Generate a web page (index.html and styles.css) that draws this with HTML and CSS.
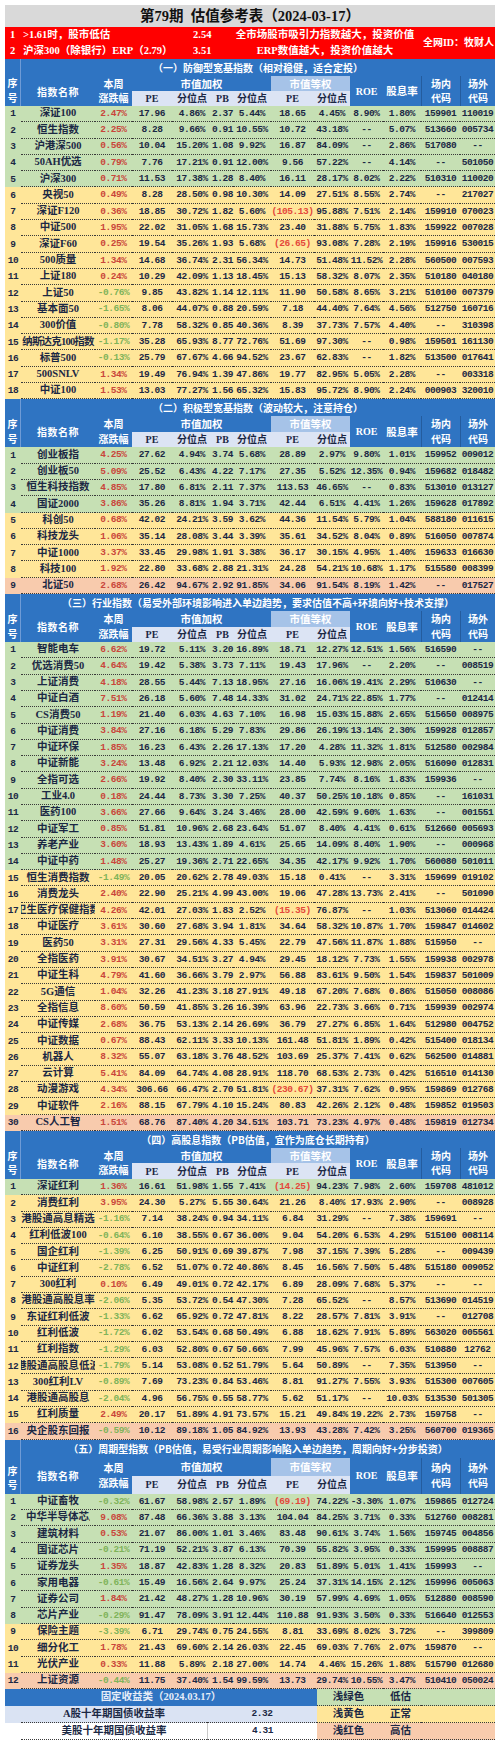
FILE: index.html
```html
<!DOCTYPE html>
<html lang="zh-CN">
<head>
<meta charset="utf-8">
<title>第79期 估值参考表</title>
<link rel="stylesheet" href="styles.css">
</head>
<body>
<div class="sheet">
  <div class="title">第79期  估值参考表（2024-03-17）</div>

  <div class="redbar">
    <span class="rn">1</span><span class="rl">&gt;1.61时，股市低估</span><span class="rv">2.54</span><span class="rdesc">全市场股市吸引力指数越大，投资价值</span><span class="rid">全网ID：牧财人</span>
    <span class="rn">2</span><span class="rl">沪深300（除银行）ERP（2.79）</span><span class="rv">3.51</span><span class="rdesc">ERP数值越大，投资价值越大</span>
  </div>

  <!-- 一 -->
  <div class="hd hd-s1">
    <span class="corner"><span>序</span><span>号</span></span>
    <span class="stitle">（一）防御型宽基指数（相对稳健，适合定投）</span>
    <span class="h-name">指数名称</span>
    <span class="h-chg"><span>本周</span><span>涨跌幅</span></span>
    <span class="h-mw">市值加权</span>
    <span class="h-me">市值等权</span>
    <span class="sub s4">PE</span><span class="sub s5">分位点</span><span class="sub s6">PB</span><span class="sub s7">分位点</span><span class="sub s8">PE</span><span class="sub s9">分位点</span>
    <span class="h-roe">ROE</span>
    <span class="h-dy">股息率</span>
    <span class="h-c1"><span>场内</span><span>代码</span></span>
    <span class="h-c2"><span>场外</span><span>代码</span></span>
  </div>
  <div class="row g"><span>1</span><span>深证100</span><span class="up">2.47%</span><span>17.96</span><span>4.86%</span><span>2.37</span><span>5.44%</span><span>18.65</span><span>4.45%</span><span>8.90%</span><span>1.80%</span><span>159901</span><span>110019</span></div>
  <div class="row g"><span>2</span><span>恒生指数</span><span class="up">2.25%</span><span>8.28</span><span>9.66%</span><span>0.91</span><span>10.55%</span><span>10.72</span><span>43.18%</span><span>--</span><span>5.07%</span><span>513660</span><span>005734</span></div>
  <div class="row g"><span>3</span><span>沪港深500</span><span class="up">0.56%</span><span>10.04</span><span>15.20%</span><span>1.08</span><span>9.92%</span><span>16.87</span><span>84.09%</span><span>--</span><span>2.86%</span><span>517080</span><span>--</span></div>
  <div class="row g"><span>4</span><span>50AH优选</span><span class="up">0.79%</span><span>7.76</span><span>17.21%</span><span>0.91</span><span>12.00%</span><span>9.56</span><span>57.22%</span><span>--</span><span>4.14%</span><span>--</span><span>501050</span></div>
  <div class="row g"><span>5</span><span>沪深300</span><span class="up">0.71%</span><span>11.53</span><span>17.38%</span><span>1.28</span><span>8.40%</span><span>16.11</span><span>28.17%</span><span>8.02%</span><span>2.22%</span><span>510310</span><span>110020</span></div>
  <div class="row y"><span>6</span><span>央视50</span><span class="up">0.49%</span><span>8.28</span><span>28.50%</span><span>0.98</span><span>10.30%</span><span>14.09</span><span>27.51%</span><span>8.55%</span><span>2.74%</span><span>--</span><span>217027</span></div>
  <div class="row y"><span>7</span><span>深证F120</span><span class="up">0.36%</span><span>18.85</span><span>30.72%</span><span>1.82</span><span>5.60%</span><span class="rd">(105.13)</span><span>95.88%</span><span>7.51%</span><span>2.14%</span><span>159910</span><span>070023</span></div>
  <div class="row y"><span>8</span><span>中证500</span><span class="up">1.95%</span><span>22.02</span><span>31.05%</span><span>1.68</span><span>15.73%</span><span>23.40</span><span>31.88%</span><span>5.75%</span><span>1.83%</span><span>159922</span><span>007028</span></div>
  <div class="row y"><span>9</span><span>深证F60</span><span class="up">0.25%</span><span>19.54</span><span>35.26%</span><span>1.93</span><span>5.68%</span><span class="rd">(26.65)</span><span>93.08%</span><span>7.28%</span><span>2.19%</span><span>159916</span><span>530015</span></div>
  <div class="row y"><span>10</span><span>500质量</span><span class="up">1.34%</span><span>14.68</span><span>36.74%</span><span>2.31</span><span>56.34%</span><span>14.73</span><span>51.48%</span><span>11.52%</span><span>2.28%</span><span>560500</span><span>007593</span></div>
  <div class="row y"><span>11</span><span>上证180</span><span class="up">0.24%</span><span>10.29</span><span>42.09%</span><span>1.13</span><span>18.45%</span><span>15.13</span><span>58.32%</span><span>8.07%</span><span>2.35%</span><span>510180</span><span>040180</span></div>
  <div class="row y"><span>12</span><span>上证50</span><span class="dn">-0.76%</span><span>9.85</span><span>43.82%</span><span>1.14</span><span>12.11%</span><span>11.90</span><span>50.58%</span><span>8.65%</span><span>3.21%</span><span>510100</span><span>007379</span></div>
  <div class="row y"><span>13</span><span>基本面50</span><span class="dn">-1.65%</span><span>8.06</span><span>44.07%</span><span>0.88</span><span>20.59%</span><span>7.18</span><span>44.40%</span><span>7.64%</span><span>4.56%</span><span>512750</span><span>160716</span></div>
  <div class="row y"><span>14</span><span>300价值</span><span class="dn">-0.80%</span><span>7.78</span><span>58.32%</span><span>0.85</span><span>40.36%</span><span>8.39</span><span>37.73%</span><span>7.57%</span><span>4.40%</span><span>--</span><span>310398</span></div>
  <div class="row y"><span>15</span><span class="tight">纳斯达克100指数</span><span class="dn">-1.17%</span><span>35.28</span><span>65.93%</span><span>8.77</span><span>72.76%</span><span>51.69</span><span>97.30%</span><span>--</span><span>0.98%</span><span>159501</span><span>161130</span></div>
  <div class="row y"><span>16</span><span>标普500</span><span class="dn">-0.13%</span><span>25.79</span><span>67.67%</span><span>4.66</span><span>94.52%</span><span>23.67</span><span>62.83%</span><span>--</span><span>1.82%</span><span>513500</span><span>017641</span></div>
  <div class="row y"><span>17</span><span>500SNLV</span><span class="up">1.34%</span><span>19.49</span><span>76.94%</span><span>1.39</span><span>47.86%</span><span>19.77</span><span>82.95%</span><span>5.05%</span><span>2.28%</span><span>--</span><span>003318</span></div>
  <div class="row y"><span>18</span><span>中证100</span><span class="up">1.53%</span><span>13.03</span><span>77.27%</span><span>1.56</span><span>65.32%</span><span>15.83</span><span>95.72%</span><span>8.90%</span><span>2.24%</span><span>000903</span><span>320010</span></div>

  <!-- 二 -->
  <div class="hd">
    <span class="corner"><span>序</span><span>号</span></span>
    <span class="stitle">（二）积极型宽基指数（波动较大，注意持仓）</span>
    <span class="h-name">指数名称</span>
    <span class="h-chg"><span>本周</span><span>涨跌幅</span></span>
    <span class="h-mw">市值加权</span>
    <span class="h-me">市值等权</span>
    <span class="sub s4">PE</span><span class="sub s5">分位点</span><span class="sub s6">PB</span><span class="sub s7">分位点</span><span class="sub s8">PE</span><span class="sub s9">分位点</span>
    <span class="h-roe">ROE</span>
    <span class="h-dy">股息率</span>
    <span class="h-c1"><span>场内</span><span>代码</span></span>
    <span class="h-c2"><span>场外</span><span>代码</span></span>
  </div>
  <div class="row g"><span>1</span><span>创业板指</span><span class="up">4.25%</span><span>27.62</span><span>4.94%</span><span>3.74</span><span>5.68%</span><span>28.89</span><span>2.97%</span><span>9.80%</span><span>1.01%</span><span>159952</span><span>009012</span></div>
  <div class="row g"><span>2</span><span>创业板50</span><span class="up">5.09%</span><span>25.52</span><span>6.43%</span><span>4.22</span><span>7.17%</span><span>27.35</span><span>5.52%</span><span>12.35%</span><span>0.94%</span><span>159682</span><span>018482</span></div>
  <div class="row g"><span>3</span><span>恒生科技指数</span><span class="up">4.85%</span><span>17.80</span><span>6.81%</span><span>2.11</span><span>7.37%</span><span>113.53</span><span>46.65%</span><span>--</span><span>0.83%</span><span>513010</span><span>013127</span></div>
  <div class="row g"><span>4</span><span>国证2000</span><span class="up">3.86%</span><span>35.26</span><span>8.81%</span><span>1.94</span><span>3.71%</span><span>42.44</span><span>6.51%</span><span>4.41%</span><span>1.26%</span><span>159628</span><span>017892</span></div>
  <div class="row y"><span>5</span><span>科创50</span><span class="up">0.68%</span><span>42.02</span><span>24.21%</span><span>3.59</span><span>3.62%</span><span>44.36</span><span>11.54%</span><span>5.79%</span><span>1.04%</span><span>588180</span><span>011615</span></div>
  <div class="row y"><span>6</span><span>科技龙头</span><span class="up">1.06%</span><span>35.14</span><span>28.08%</span><span>3.44</span><span>3.39%</span><span>35.61</span><span>34.52%</span><span>8.04%</span><span>0.89%</span><span>516050</span><span>007874</span></div>
  <div class="row y"><span>7</span><span>中证1000</span><span class="up">3.37%</span><span>33.45</span><span>29.98%</span><span>1.91</span><span>3.38%</span><span>36.17</span><span>30.15%</span><span>4.95%</span><span>1.40%</span><span>159633</span><span>016630</span></div>
  <div class="row y"><span>8</span><span>科技100</span><span class="up">1.92%</span><span>22.80</span><span>33.68%</span><span>2.88</span><span>21.31%</span><span>24.28</span><span>54.21%</span><span>10.68%</span><span>1.17%</span><span>515580</span><span>008399</span></div>
  <div class="row r"><span>9</span><span>北证50</span><span class="up">2.68%</span><span>26.42</span><span>94.67%</span><span>2.92</span><span>91.85%</span><span>34.06</span><span>91.54%</span><span>8.19%</span><span>1.42%</span><span>--</span><span>017527</span></div>

  <!-- 三 -->
  <div class="hd">
    <span class="corner"><span>序</span><span>号</span></span>
    <span class="stitle">（三）行业指数（易受外部环境影响进入单边趋势，要求估值不高+环境向好+技术支撑）</span>
    <span class="h-name">指数名称</span>
    <span class="h-chg"><span>本周</span><span>涨跌幅</span></span>
    <span class="h-mw">市值加权</span>
    <span class="h-me">市值等权</span>
    <span class="sub s4">PE</span><span class="sub s5">分位点</span><span class="sub s6">PB</span><span class="sub s7">分位点</span><span class="sub s8">PE</span><span class="sub s9">分位点</span>
    <span class="h-roe">ROE</span>
    <span class="h-dy">股息率</span>
    <span class="h-c1"><span>场内</span><span>代码</span></span>
    <span class="h-c2"><span>场外</span><span>代码</span></span>
  </div>
  <div class="row g"><span>1</span><span>智能电车</span><span class="up">6.62%</span><span>19.72</span><span>5.11%</span><span>3.20</span><span>16.89%</span><span>18.71</span><span>12.27%</span><span>12.51%</span><span>1.56%</span><span>516590</span><span>--</span></div>
  <div class="row g"><span>2</span><span>优选消费50</span><span class="up">4.64%</span><span>19.42</span><span>5.38%</span><span>3.73</span><span>7.11%</span><span>19.43</span><span>17.96%</span><span>--</span><span>2.20%</span><span>--</span><span>008519</span></div>
  <div class="row g"><span>3</span><span>上证消费</span><span class="up">4.18%</span><span>28.55</span><span>5.44%</span><span>7.13</span><span>18.95%</span><span>27.16</span><span>16.06%</span><span>19.41%</span><span>2.29%</span><span>510630</span><span>--</span></div>
  <div class="row g"><span>4</span><span>中证白酒</span><span class="up">7.51%</span><span>26.18</span><span>5.60%</span><span>7.48</span><span>14.33%</span><span>31.02</span><span>24.71%</span><span>22.85%</span><span>1.77%</span><span>--</span><span>012414</span></div>
  <div class="row g"><span>5</span><span>CS消费50</span><span class="up">1.19%</span><span>21.40</span><span>6.03%</span><span>4.63</span><span>7.10%</span><span>16.98</span><span>15.03%</span><span>15.88%</span><span>2.65%</span><span>515650</span><span>008975</span></div>
  <div class="row g"><span>6</span><span>中证消费</span><span class="up">3.84%</span><span>27.16</span><span>6.18%</span><span>5.29</span><span>7.83%</span><span>29.86</span><span>26.19%</span><span>13.14%</span><span>2.30%</span><span>159928</span><span>012857</span></div>
  <div class="row g"><span>7</span><span>中证环保</span><span class="up">1.85%</span><span>16.23</span><span>6.43%</span><span>2.26</span><span>17.13%</span><span>17.20</span><span>4.28%</span><span>11.32%</span><span>1.81%</span><span>512580</span><span>002984</span></div>
  <div class="row g"><span>8</span><span>中证新能</span><span class="up">3.24%</span><span>13.48</span><span>6.92%</span><span>2.21</span><span>12.03%</span><span>14.40</span><span>5.93%</span><span>12.98%</span><span>2.05%</span><span>516090</span><span>012831</span></div>
  <div class="row g"><span>9</span><span>全指可选</span><span class="up">2.66%</span><span>19.92</span><span>8.40%</span><span>2.30</span><span>33.11%</span><span>23.85</span><span>7.74%</span><span>8.16%</span><span>1.83%</span><span>159936</span><span>--</span></div>
  <div class="row g"><span>10</span><span>工业4.0</span><span class="up">0.18%</span><span>24.44</span><span>8.73%</span><span>3.30</span><span>7.25%</span><span>40.37</span><span>50.25%</span><span>10.18%</span><span>0.85%</span><span>--</span><span>161031</span></div>
  <div class="row g"><span>11</span><span>医药100</span><span class="up">3.66%</span><span>27.66</span><span>9.64%</span><span>3.24</span><span>3.46%</span><span>28.00</span><span>42.59%</span><span>9.60%</span><span>1.63%</span><span>--</span><span>001551</span></div>
  <div class="row g"><span>12</span><span>中证军工</span><span class="up">0.85%</span><span>51.81</span><span>10.96%</span><span>2.68</span><span>23.64%</span><span>51.07</span><span>8.40%</span><span>4.41%</span><span>0.61%</span><span>512660</span><span>005693</span></div>
  <div class="row g"><span>13</span><span>养老产业</span><span class="up">3.60%</span><span>18.93</span><span>13.43%</span><span>1.89</span><span>4.61%</span><span>25.65</span><span>14.09%</span><span>8.40%</span><span>1.90%</span><span>--</span><span>000968</span></div>
  <div class="row g"><span>14</span><span>中证中药</span><span class="up">1.48%</span><span>25.27</span><span>19.36%</span><span>2.71</span><span>22.65%</span><span>34.35</span><span>42.17%</span><span>9.92%</span><span>1.70%</span><span>560080</span><span>501011</span></div>
  <div class="row y"><span>15</span><span>恒生消费指数</span><span class="dn">-1.49%</span><span>20.05</span><span>20.62%</span><span>2.78</span><span>49.03%</span><span>15.18</span><span>0.41%</span><span>--</span><span>3.31%</span><span>159699</span><span>019102</span></div>
  <div class="row y"><span>16</span><span>消费龙头</span><span class="up">2.40%</span><span>22.90</span><span>25.21%</span><span>4.99</span><span>43.00%</span><span>19.06</span><span>47.28%</span><span>13.73%</span><span>2.41%</span><span>--</span><span>501090</span></div>
  <div class="row y"><span>17</span><span>卫生医疗保健指数</span><span class="up">4.26%</span><span>42.01</span><span>27.03%</span><span>1.83</span><span>2.52%</span><span class="rd">(15.35)</span><span>76.87%</span><span>--</span><span>1.03%</span><span>513060</span><span>014424</span></div>
  <div class="row y"><span>18</span><span>中证医疗</span><span class="up">3.61%</span><span>30.60</span><span>27.68%</span><span>3.94</span><span>1.81%</span><span>34.64</span><span>58.32%</span><span>10.87%</span><span>1.70%</span><span>159847</span><span>014602</span></div>
  <div class="row y"><span>19</span><span>医药50</span><span class="up">3.31%</span><span>27.31</span><span>29.56%</span><span>4.33</span><span>5.45%</span><span>22.79</span><span>47.56%</span><span>11.87%</span><span>1.88%</span><span>515950</span><span>--</span></div>
  <div class="row y"><span>20</span><span>全指医药</span><span class="up">3.91%</span><span>30.67</span><span>34.51%</span><span>3.27</span><span>4.94%</span><span>29.45</span><span>18.12%</span><span>7.73%</span><span>1.55%</span><span>159938</span><span>002978</span></div>
  <div class="row y"><span>21</span><span>中证生科</span><span class="up">4.79%</span><span>41.60</span><span>36.66%</span><span>3.79</span><span>2.97%</span><span>56.88</span><span>83.61%</span><span>9.50%</span><span>1.54%</span><span>159837</span><span>501009</span></div>
  <div class="row y"><span>22</span><span>5G通信</span><span class="up">1.04%</span><span>32.26</span><span>41.23%</span><span>3.18</span><span>27.91%</span><span>49.18</span><span>67.20%</span><span>7.68%</span><span>0.86%</span><span>515050</span><span>008086</span></div>
  <div class="row y"><span>23</span><span>全指信息</span><span class="up">8.60%</span><span>50.59</span><span>41.85%</span><span>3.26</span><span>16.39%</span><span>63.96</span><span>22.73%</span><span>3.66%</span><span>0.71%</span><span>159939</span><span>002974</span></div>
  <div class="row y"><span>24</span><span>中证传媒</span><span class="up">2.68%</span><span>36.75</span><span>53.13%</span><span>2.14</span><span>26.69%</span><span>36.79</span><span>27.27%</span><span>6.85%</span><span>1.64%</span><span>512980</span><span>004752</span></div>
  <div class="row y"><span>25</span><span>中证数据</span><span class="up">0.67%</span><span>88.43</span><span>62.11%</span><span>3.33</span><span>10.13%</span><span>161.48</span><span>51.81%</span><span>1.89%</span><span>0.42%</span><span>515400</span><span>018134</span></div>
  <div class="row y"><span>26</span><span>机器人</span><span class="up">8.32%</span><span>55.07</span><span>63.18%</span><span>3.76</span><span>48.52%</span><span>103.69</span><span>25.37%</span><span>7.41%</span><span>0.62%</span><span>562500</span><span>014881</span></div>
  <div class="row y"><span>27</span><span>云计算</span><span class="up">5.41%</span><span>84.09</span><span>64.74%</span><span>4.08</span><span>28.91%</span><span>118.70</span><span>68.53%</span><span>2.73%</span><span>0.42%</span><span>516510</span><span>014130</span></div>
  <div class="row y"><span>28</span><span>动漫游戏</span><span class="up">4.34%</span><span>306.66</span><span>66.47%</span><span>2.70</span><span>51.81%</span><span class="rd">(230.67)</span><span>37.31%</span><span>7.62%</span><span>0.95%</span><span>159869</span><span>012768</span></div>
  <div class="row y"><span>29</span><span>中证软件</span><span class="up">2.16%</span><span>88.15</span><span>67.79%</span><span>4.10</span><span>15.24%</span><span>80.83</span><span>42.26%</span><span>2.12%</span><span>0.48%</span><span>159852</span><span>019503</span></div>
  <div class="row r"><span>30</span><span>CS人工智</span><span class="up">1.51%</span><span>68.76</span><span>87.40%</span><span>4.20</span><span>34.51%</span><span>103.71</span><span>73.23%</span><span>4.97%</span><span>0.48%</span><span>159819</span><span>012734</span></div>

  <!-- 四 -->
  <div class="hd">
    <span class="corner"><span>序</span><span>号</span></span>
    <span class="stitle">（四）高股息指数（PB估值，宜作为底仓长期持有）</span>
    <span class="h-name">指数名称</span>
    <span class="h-chg"><span>本周</span><span>涨跌幅</span></span>
    <span class="h-mw">市值加权</span>
    <span class="h-me">市值等权</span>
    <span class="sub s4">PE</span><span class="sub s5">分位点</span><span class="sub s6">PB</span><span class="sub s7">分位点</span><span class="sub s8">PE</span><span class="sub s9">分位点</span>
    <span class="h-roe">ROE</span>
    <span class="h-dy">股息率</span>
    <span class="h-c1"><span>场内</span><span>代码</span></span>
    <span class="h-c2"><span>场外</span><span>代码</span></span>
  </div>
  <div class="row g"><span>1</span><span>深证红利</span><span class="up">1.36%</span><span>16.61</span><span>51.98%</span><span>1.55</span><span>7.41%</span><span class="rd">(14.25)</span><span>94.23%</span><span>7.98%</span><span>2.60%</span><span>159708</span><span>481012</span></div>
  <div class="row y"><span>2</span><span>消费红利</span><span class="up">3.95%</span><span>24.30</span><span>5.27%</span><span>5.55</span><span>30.64%</span><span>21.26</span><span>8.40%</span><span>17.93%</span><span>2.90%</span><span>--</span><span>008928</span></div>
  <div class="row y"><span>3</span><span>港股通高息精选</span><span class="dn">-1.16%</span><span>7.14</span><span>38.24%</span><span>0.94</span><span>34.11%</span><span>6.84</span><span>31.29%</span><span>--</span><span>7.38%</span><span>159691</span><span>--</span></div>
  <div class="row y"><span>4</span><span>红利低波100</span><span class="dn">-0.64%</span><span>6.10</span><span>38.55%</span><span>0.67</span><span>36.00%</span><span>9.04</span><span>54.20%</span><span>6.53%</span><span>4.29%</span><span>515100</span><span>008114</span></div>
  <div class="row y"><span>5</span><span>国企红利</span><span class="dn">-1.39%</span><span>6.25</span><span>50.91%</span><span>0.69</span><span>39.87%</span><span>7.98</span><span>37.15%</span><span>7.39%</span><span>5.28%</span><span>--</span><span>009439</span></div>
  <div class="row y"><span>6</span><span>中证红利</span><span class="dn">-2.78%</span><span>6.52</span><span>51.07%</span><span>0.72</span><span>40.86%</span><span>8.45</span><span>16.56%</span><span>7.50%</span><span>5.48%</span><span>515180</span><span>009052</span></div>
  <div class="row y"><span>7</span><span>300红利</span><span class="up">0.10%</span><span>6.49</span><span>49.01%</span><span>0.72</span><span>42.17%</span><span>6.89</span><span>28.09%</span><span>7.68%</span><span>5.37%</span><span>--</span><span>--</span></div>
  <div class="row y"><span>8</span><span>港股通高股息率</span><span class="dn">-2.06%</span><span>5.35</span><span>53.72%</span><span>0.54</span><span>47.30%</span><span>7.28</span><span>65.52%</span><span>--</span><span>8.57%</span><span>513690</span><span>014519</span></div>
  <div class="row y"><span>9</span><span>东证红利低波</span><span class="dn">-1.33%</span><span>6.62</span><span>65.92%</span><span>0.72</span><span>47.81%</span><span>8.22</span><span>28.57%</span><span>7.81%</span><span>3.91%</span><span>--</span><span>012708</span></div>
  <div class="row y"><span>10</span><span>红利低波</span><span class="dn">-1.72%</span><span>6.02</span><span>53.54%</span><span>0.68</span><span>50.49%</span><span>6.88</span><span>18.62%</span><span>7.91%</span><span>5.89%</span><span>563020</span><span>005561</span></div>
  <div class="row y"><span>11</span><span>红利指数</span><span class="dn">-1.29%</span><span>6.03</span><span>52.80%</span><span>0.67</span><span>50.66%</span><span>7.99</span><span>45.96%</span><span>7.57%</span><span>6.03%</span><span>510880</span><span>12762</span></div>
  <div class="row y"><span>12</span><span>港股通高股息低波</span><span class="dn">-1.79%</span><span>5.14</span><span>53.08%</span><span>0.52</span><span>51.79%</span><span>5.64</span><span>50.89%</span><span>--</span><span>7.35%</span><span>513950</span><span>--</span></div>
  <div class="row y"><span>13</span><span>300红利LV</span><span class="dn">-0.89%</span><span>7.69</span><span>73.23%</span><span>0.84</span><span>53.46%</span><span>8.81</span><span>91.27%</span><span>7.55%</span><span>3.93%</span><span>515300</span><span>007605</span></div>
  <div class="row y"><span>14</span><span>港股通高股息</span><span class="dn">-2.04%</span><span>4.96</span><span>56.75%</span><span>0.55</span><span>58.77%</span><span>5.62</span><span>51.17%</span><span>--</span><span>10.03%</span><span>513530</span><span>501305</span></div>
  <div class="row y"><span>15</span><span>红利质量</span><span class="up">2.49%</span><span>20.17</span><span>51.89%</span><span>4.91</span><span>73.57%</span><span>15.21</span><span>49.84%</span><span>19.22%</span><span>2.73%</span><span>159758</span><span>--</span></div>
  <div class="row r"><span>16</span><span>央企股东回报</span><span class="dn">-0.59%</span><span>10.12</span><span>89.18%</span><span>1.05</span><span>84.92%</span><span>13.93</span><span>43.28%</span><span>7.42%</span><span>3.25%</span><span>560700</span><span>019365</span></div>

  <!-- 五 -->
  <div class="hd hd-s5">
    <span class="corner"><span>序</span><span>号</span></span>
    <span class="stitle">（五）周期型指数（PB估值，易受行业周期影响陷入单边趋势，周期向好+分步投资）</span>
    <span class="h-name">指数名称</span>
    <span class="h-chg"><span>本周</span><span>涨跌幅</span></span>
    <span class="h-mw">市值加权</span>
    <span class="h-me">市值等权</span>
    <span class="sub s4">PE</span><span class="sub s5">分位点</span><span class="sub s6">PB</span><span class="sub s7">分位点</span><span class="sub s8">PE</span><span class="sub s9">分位点</span>
    <span class="h-roe">ROE</span>
    <span class="h-dy">股息率</span>
    <span class="h-c1"><span>场内</span><span>代码</span></span>
    <span class="h-c2"><span>场外</span><span>代码</span></span>
  </div>
  <div class="row g"><span>1</span><span>中证畜牧</span><span class="dn">-0.32%</span><span>61.67</span><span>58.98%</span><span>2.57</span><span>1.89%</span><span class="rd">(69.19)</span><span>74.22%</span><span>-3.30%</span><span>1.07%</span><span>159865</span><span>012724</span></div>
  <div class="row g"><span>2</span><span class="wrap"><span class="wrap-in">中华半导体芯片</span></span><span class="up">9.08%</span><span>87.48</span><span>66.36%</span><span>3.88</span><span>3.13%</span><span>104.04</span><span>84.25%</span><span>3.71%</span><span>0.33%</span><span>512760</span><span>008281</span></div>
  <div class="row g"><span>3</span><span>建筑材料</span><span class="up">0.53%</span><span>21.07</span><span>86.00%</span><span>1.01</span><span>3.46%</span><span>83.48</span><span>90.61%</span><span>3.74%</span><span>1.56%</span><span>159745</span><span>004856</span></div>
  <div class="row g"><span>4</span><span>国证芯片</span><span class="dn">-0.21%</span><span>71.19</span><span>52.21%</span><span>3.87</span><span>6.13%</span><span>70.39</span><span>55.82%</span><span>3.95%</span><span>0.33%</span><span>159995</span><span>008887</span></div>
  <div class="row g"><span>5</span><span>证券龙头</span><span class="up">1.35%</span><span>18.87</span><span>42.83%</span><span>1.28</span><span>8.32%</span><span>20.83</span><span>51.89%</span><span>5.01%</span><span>1.41%</span><span>159993</span><span>--</span></div>
  <div class="row g"><span>6</span><span>家用电器</span><span class="dn">-0.61%</span><span>15.49</span><span>16.56%</span><span>2.64</span><span>9.97%</span><span>25.24</span><span>37.31%</span><span>14.15%</span><span>2.12%</span><span>159996</span><span>005063</span></div>
  <div class="row g"><span>7</span><span>证券公司</span><span class="up">1.84%</span><span>21.42</span><span>48.27%</span><span>1.28</span><span>10.96%</span><span>30.19</span><span>57.99%</span><span>4.69%</span><span>1.05%</span><span>512880</span><span>008590</span></div>
  <div class="row g"><span>8</span><span>芯片产业</span><span class="dn">-0.29%</span><span>91.47</span><span>78.09%</span><span>3.91</span><span>12.44%</span><span>110.88</span><span>91.93%</span><span>3.50%</span><span>0.33%</span><span>516640</span><span>012553</span></div>
  <div class="row y"><span>9</span><span>保险主题</span><span class="dn">-3.39%</span><span>6.71</span><span>29.74%</span><span>0.75</span><span>24.55%</span><span>8.81</span><span>33.69%</span><span>8.02%</span><span>3.72%</span><span>--</span><span>399809</span></div>
  <div class="row y"><span>10</span><span>细分化工</span><span class="up">1.78%</span><span>21.43</span><span>69.60%</span><span>2.14</span><span>26.03%</span><span>22.45</span><span>69.03%</span><span>7.76%</span><span>2.07%</span><span>159870</span><span>--</span></div>
  <div class="row y"><span>11</span><span>光伏产业</span><span class="up">0.33%</span><span>11.88</span><span>5.89%</span><span>2.18</span><span>27.00%</span><span>14.74</span><span>4.46%</span><span>15.26%</span><span>1.88%</span><span>515790</span><span>012680</span></div>
  <div class="row r"><span>12</span><span>上证资源</span><span class="dn">-0.44%</span><span>11.75</span><span>37.40%</span><span>1.54</span><span>99.59%</span><span>13.73</span><span>29.74%</span><span>10.55%</span><span>3.47%</span><span>510410</span><span>050024</span></div>

  <!-- 固定收益 -->
  <div class="fixed">
    <span class="fx-title">固定收益类（2024.03.17）</span>
    <span class="lg g">浅绿色</span><span class="lg g">低估</span><span class="lg g"></span>
    <span class="fx-no lav"></span><span class="fx-lbl lav">A股十年期国债收益率</span><span class="fx-val lav">2.32</span>
    <span class="lg y">浅黄色</span><span class="lg y">正常</span><span class="lg y"></span>
    <span class="fx-no"></span><span class="fx-lbl">美股十年期国债收益率</span><span class="fx-val sep">4.31</span>
    <span class="lg r">浅红色</span><span class="lg r">高估</span><span class="lg r"></span>
  </div>
</div>
</body>
</html>
```

FILE: styles.css
```css
:root {
  --cols: 16px 74px 37px 40px 40px 21px 38px 43px 36px 33px 38px 39px 35px;
  --blue: #2f74c2;
  --lightblue: #a6c3e8;
  --lav: #dce4f4;
  --green: #c6e0b4;
  --yellow: #ffe699;
  --salmon: #f8cbad;
  --ink: #1b2844;
}

html, body {
  margin: 0;
  padding: 0;
  background: #fff;
}

body {
  font-family: "Liberation Serif", "Noto Sans CJK SC", serif;
  font-weight: bold;
  color: var(--ink);
}

.sheet {
  width: 490px;
  margin: 5px 5px 0 5px;
}

/* title */
.title {
  height: 22px;
  background: #d9d9d9;
  display: flex;
  align-items: center;
  justify-content: center;
  font-size: 14.5px;
  color: #111;
  white-space: pre;
  line-height: 1;
}

/* red info bar */
.redbar {
  background: #ff0000;
  color: #fff;
  display: grid;
  grid-template-columns: 18px 167px 38px 194px 73px;
  grid-template-rows: 16px 16px;
  font-size: 10.5px;
  line-height: 1;
}
.redbar > span {
  display: flex;
  align-items: center;
  white-space: nowrap;
}
.rn { padding-left: 5px; }
.rv { padding-left: 3px; }
.rdesc { justify-content: center; }
.rid {
  grid-column: 5;
  grid-row: 1 / 3;
  justify-content: center;
  font-size: 10px;
}

/* section header */
.hd {
  display: grid;
  grid-template-columns: var(--cols);
  grid-template-rows: 17px 15.5px 15.5px;
  background: var(--blue);
  color: #fff;
  font-family: "Noto Sans CJK SC", sans-serif;
  font-size: 10.5px;
  line-height: 1.1;
}
.hd-s1 { grid-template-rows: 17px 15px 15px; }
.hd-s5 { grid-template-rows: 18px 18px 18px; }

.hd > span {
  display: flex;
  align-items: center;
  justify-content: center;
  text-align: center;
  white-space: nowrap;
}
.hd .corner {
  grid-column: 1;
  grid-row: 1 / 4;
  flex-direction: column;
  justify-content: flex-end;
  padding-bottom: 1px;
  border-right: 1px solid #6f9bd6;
  box-sizing: border-box;
  font-size: 10px;
  line-height: 1.45;
}
.hd .stitle {
  grid-column: 2 / 14;
  grid-row: 1;
  font-size: 10px;
}
.hd .h-name { grid-column: 2; grid-row: 2 / 4; font-size: 10px; letter-spacing: 0.5px; }
.hd .h-chg,
.hd .h-c1,
.hd .h-c2 {
  grid-row: 2 / 4;
  flex-direction: column;
  font-size: 10px;
  line-height: 1.45;
}
.hd .h-chg { grid-column: 3; }
.hd .h-mw { grid-column: 4 / 8; grid-row: 2; }
.hd .h-me { grid-column: 8 / 10; grid-row: 2; background: var(--lightblue); }
.hd .sub {
  grid-row: 3;
  background: var(--lav);
  color: var(--ink);
  font-family: "Liberation Serif", "Noto Sans CJK SC", serif;
  font-size: 10px;
}
.hd .s4 { grid-column: 4; }
.hd .s5 { grid-column: 5; }
.hd .s6 { grid-column: 6; }
.hd .s7 { grid-column: 7; }
.hd .s8 { grid-column: 8; }
.hd .s9 { grid-column: 9; }
.hd .h-roe { grid-column: 10; grid-row: 2 / 4; font-family: "Liberation Serif", serif; font-size: 10px; }
.hd .h-dy { grid-column: 11; grid-row: 2 / 4; }
.hd .h-c1 { grid-column: 12; border-left: 1px solid #245c9e; }
.hd .h-c2 { grid-column: 13; border-left: 1px solid #245c9e; }

/* data rows */
.row {
  display: grid;
  grid-template-columns: var(--cols);
  height: 16.3px;
}
.row.g { background: var(--green); }
.row.y { background: var(--yellow); }
.row.r { background: var(--salmon); }

.row > span {
  display: flex;
  align-items: center;
  justify-content: center;
  white-space: nowrap;
  box-sizing: border-box;
  border-bottom: 1px dotted #3a3a3a;
  font-family: "Liberation Mono", monospace;
  font-size: 9.5px;
  letter-spacing: -0.45px;
  line-height: 1;
}
.row > span:first-child {
  border-bottom: none;
}
.row > span:nth-child(2) {
  font-family: "Liberation Serif", "Noto Sans CJK SC", serif;
  font-size: 10.5px;
  letter-spacing: 0;
  overflow: hidden;
}
.row > span.tight { letter-spacing: -0.8px; }
.row > span.wrap {
  align-items: flex-start;
}
.wrap-in {
  display: block;
  width: 64px;
  height: 15px;
  overflow: hidden;
  white-space: nowrap;
  text-align: left;
  padding-top: 0;
  line-height: 13px;
}

.up { color: #c9463b; }
.dn { color: #7fb35a; }
.rd { color: #e4483b; }

/* fixed income */
.fixed {
  display: grid;
  grid-template-columns: 16px 186px 110px 63px 41px 74px;
  grid-template-rows: 17px 17px 17px;
  font-size: 10.5px;
  line-height: 1;
}
.fixed > span {
  display: flex;
  align-items: center;
  justify-content: center;
  white-space: nowrap;
  box-sizing: border-box;
}
.fx-title {
  grid-column: 1 / 4;
  background: var(--blue);
  color: #e6edf8;
  font-family: "Liberation Serif", "Noto Sans CJK SC", serif;
}
.fx-lbl, .fx-val, .lg {
  border-bottom: 1px dotted #3a3a3a;
}
.fx-val {
  font-family: "Liberation Mono", monospace;
  font-size: 9.5px;
  letter-spacing: -0.45px;
}
.fx-val.sep { border-left: 1px solid #c8c8c8; }
.lav { background: #dae3f3; }
.lg.g { background: var(--green); }
.lg.y { background: var(--yellow); }
.lg.r { background: var(--salmon); }
```
